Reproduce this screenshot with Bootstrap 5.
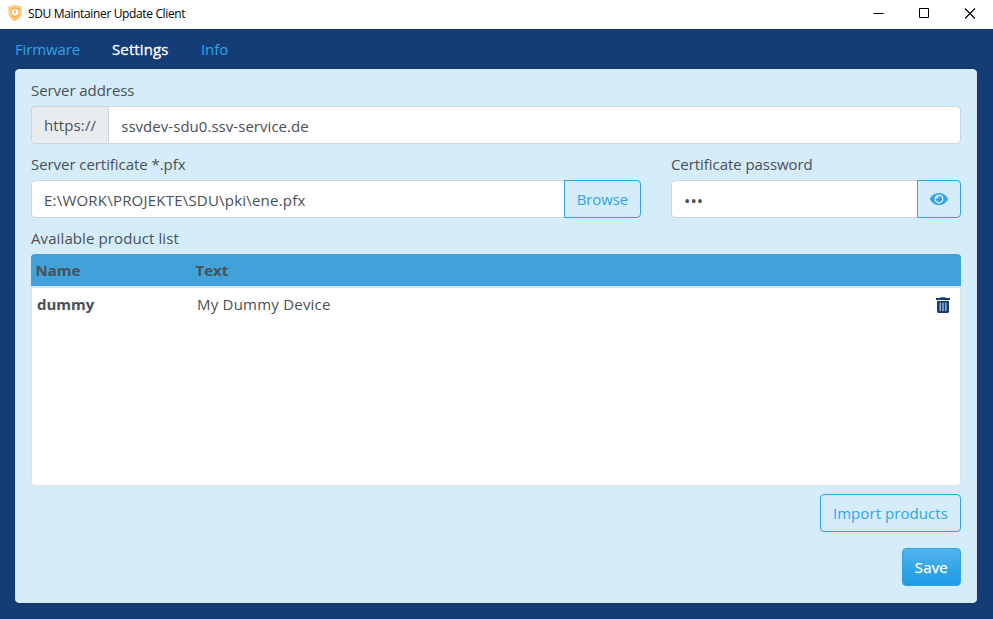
<!DOCTYPE html>
<html lang="en">
<head>
<meta charset="utf-8">
<meta name="viewport" content="width=device-width, initial-scale=1">
<title>SDU Maintainer Update Client</title>
<link href="https://cdn.jsdelivr.net/npm/bootstrap@5.3.0/dist/css/bootstrap.min.css" rel="stylesheet">
<style>
:root{--navy:#143c76;--sky:#2fa4e7;--pale:#d5ecfa}
body{font-family:"Open Sans","Noto Sans",sans-serif;font-size:15px;line-height:24px;color:#495057;background:var(--navy);height:619px;overflow:hidden}
.titlebar{height:29px;background:#fff;color:#000;font-size:12px;letter-spacing:-.36px;padding-left:7px}
.app-title{padding:8px 0 0 5px}
.winbtn{width:45.5px;height:27px;margin-left:-.5px;margin-right:.5px}
.main-nav{height:40px;padding-left:15px}
.main-nav .nav-link{padding:0;color:var(--sky);width:89px;letter-spacing:-.1px}
.main-nav .nav-link:first-child{width:97px;letter-spacing:-.13px}
.main-nav .nav-link.active{color:#fff;-webkit-text-stroke:.3px #fff;letter-spacing:.12px}
.panel{margin:0 16px 0 15px;height:534px;padding:8px 15px 0;background:var(--pale);border:1px solid #dee2e6;border-radius:4px}
.panel .form-label{margin:0 0 4px;display:block;letter-spacing:-.06px}
.form-control,.input-group-text,.panel .btn{font-size:15px;line-height:24px;height:38px;border-radius:4px}
.form-control,.input-group-text{color:#495057;border-color:#ced4da}
.form-control{padding-top:7px;padding-bottom:5px}
.input-group-text{background:#e9ecef;letter-spacing:.13px}
.host-input{letter-spacing:.04px}
.path-input{letter-spacing:.21px}
.pw-input{font-size:17px}
.field-row{--bs-gutter-x:30px;margin-top:8px}
.btn-sky{color:var(--sky);border-color:var(--sky);background:transparent}
.btn-browse{letter-spacing:-.13px}
.btn-import{letter-spacing:.07px}
.btn-save{color:#fff;border-color:var(--sky);background:linear-gradient(#54b4eb,#2fa4e7 60%,#1d9ce5);-webkit-text-stroke:.25px #fff;letter-spacing:.2px}
.panel .list-label{margin-top:8px;letter-spacing:.1px}
.list-head{height:32px;background:#40a2d8;border-radius:4px 4px 0 0;padding-left:4.500px;font-weight:700;line-height:32px}
.list-box{height:200px;background:#fff;border:1px solid #dee2e6;border-top-width:2px;border-radius:0 0 4px 4px;padding:4px 10px 0 5px}
.name-col{width:160px;flex:none}
.desc-col{letter-spacing:.22px}
</style>
</head>
<body>
<header class="titlebar d-flex align-items-start">
  <svg width="16" height="18" viewBox="0 0 16 18" class="mt-1"><path d="M8 .5C10 2 12.500 2 14.500 2.500V8C14.500 12 12 15.500 8 17C4 15.500 1.500 12 1.500 8V2.500C3.500 2 6 2 8 .5Z" fill="#f9bd68"/><path d="M8 2.300C10 3.400 11.500 3.500 13 3.800V8C13 11.200 11 13.900 8 15.300C5 13.900 3 11.200 3 8V3.800C4.500 3.500 6 3.400 8 2.300Z" fill="#f7b04a" stroke="#fde3bd" stroke-width=".9"/><circle cx="8" cy="8.300" r="3.300" fill="#fff"/><path d="M8 5.800V9.400" stroke="#f3a640" stroke-width="1.400"/></svg>
  <span class="app-title flex-grow-1 lh-1">SDU Maintainer Update Client</span>
  <div class="d-flex">
    <svg class="winbtn" viewBox="0 0 45.5 27"><path d="M17.500 13.500H27.500" stroke="#000"/></svg>
    <svg class="winbtn" viewBox="0 0 45.5 27"><path d="M17.500 8.500H26.500V17.500H17.500Z" fill="none" stroke="#000"/></svg>
    <svg class="winbtn" viewBox="0 0 45.5 27"><path d="M18 8.500L28 18.500M28 8.500L18 18.500" stroke="#000" stroke-width="1.100"/></svg>
  </div>
</header>
<nav class="nav main-nav align-items-center">
  <a class="nav-link" href="#">Firmware</a>
  <a class="nav-link active" href="#">Settings</a>
  <a class="nav-link" href="#">Info</a>
</nav>
<main class="panel">
  <label class="form-label" for="addr">Server address</label>
  <div class="input-group">
    <span class="input-group-text">https://</span>
    <input id="addr" class="form-control host-input" value="ssvdev-sdu0.ssv-service.de">
  </div>
  <div class="row field-row">
    <div class="col-8">
      <label class="form-label" for="cert">Server certificate *.pfx</label>
      <div class="input-group">
        <input id="cert" class="form-control path-input" value="E:\WORK\PROJEKTE\SDU\pki\ene.pfx">
        <button class="btn btn-sky btn-browse" type="button">Browse</button>
      </div>
    </div>
    <div class="col-4">
      <label class="form-label" for="pw">Certificate password</label>
      <div class="input-group">
        <input id="pw" type="password" class="form-control pw-input" value="ssv">
        <button class="btn btn-sky" type="button" aria-label="Show password"><svg width="18" height="16" viewBox="0 0 576 512" fill="currentColor" class="d-block"><path d="M572.520 241.400C518.290 135.590 410.930 64 288 64S57.680 135.640 3.480 241.410a32.350 32.350 0 0 0 0 29.190C57.710 376.410 165.070 448 288 448s230.320-71.640 284.520-177.410a32.350 32.350 0 0 0 0-29.190zM288 400a144 144 0 1 1 144-144 143.930 143.930 0 0 1-144 144zm0-240a95.310 95.310 0 0 0-25.310 3.790 47.850 47.850 0 0 1-66.900 66.900A95.780 95.780 0 1 0 288 160z"/></svg></button>
      </div>
    </div>
  </div>
  <span class="form-label list-label">Available product list</span>
  <div class="list-head d-flex"><span class="name-col">Name</span><span>Text</span></div>
  <div class="list-box">
    <div class="d-flex align-items-center">
      <strong class="name-col">dummy</strong><span class="desc-col flex-grow-1">My Dummy Device</span>
      <svg width="14" height="18" viewBox="0 0 14 18"><path d="M4.500 2.200H9.500V3H14V5H0V3H4.500Z" fill="#143c76"/><path d="M1 6H13V16.500Q13 18 11.500 18H2.500Q1 18 1 16.500Z" fill="#143c76"/><path d="M4.200 7.800V16M7 7.800V16M9.800 7.800V16" stroke="#c3cfdf" stroke-width="1.200"/></svg>
    </div>
  </div>
  <div class="d-flex flex-column align-items-end gap-3 mt-2">
    <button class="btn btn-sky btn-import" type="button">Import products</button>
    <button class="btn btn-save" type="button">Save</button>
  </div>
</main>
<script src="https://cdn.jsdelivr.net/npm/bootstrap@5.3.0/dist/js/bootstrap.bundle.min.js"></script>
</body>
</html>
